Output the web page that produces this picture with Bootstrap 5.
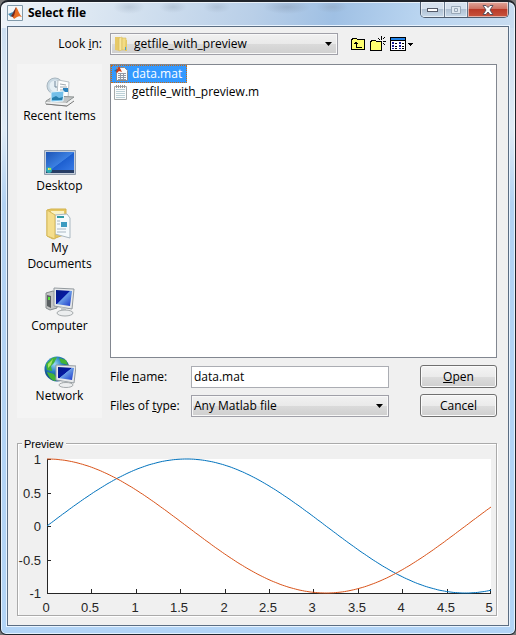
<!DOCTYPE html>
<html lang="en">
<head>
<meta charset="utf-8">
<meta name="viewport" content="width=device-width, initial-scale=1">
<title>Select file</title>
<link href="https://cdn.jsdelivr.net/npm/bootstrap@5.3.0/dist/css/bootstrap.min.css" rel="stylesheet">
<style>
body{font-family:"Open Sans","Noto Sans",sans-serif;font-size:12px;line-height:16px;color:#000;background:#777}
.window-frame{min-height:100vh;padding:0 6px 6px;border:1px solid #20242b;border-top-width:2px;border-radius:8px 8px 6px 6px;
 background:radial-gradient(ellipse 16px 7px at 128px 5px,#8c9cb055,transparent),radial-gradient(ellipse 14px 6px at 172px 5px,#8c9cb055,transparent),radial-gradient(ellipse 14px 6px at 216px 5px,#8c9cb055,transparent),radial-gradient(ellipse 24px 7px at 286px 5px,#8497b077,transparent),radial-gradient(ellipse 16px 6px at 331px 5px,#8c9cb066,transparent),linear-gradient(100deg,#eef3f8 0,#dce7f2 90px,#b9cfe8 250px,#9fc0e4 330px,#bbd6f1 420px,#c8dcf0 100%) 0 0/100% 26px no-repeat,linear-gradient(#c8dcf0 0,#e0ebf5 20%,#b2d2f3 32%,#b2d4f6 100%);box-shadow:inset 0 0 0 1px #ffffffaa}
.title-bar{height:24px}
.title-caption{padding-top:3px;gap:5px}
.title-text{font-weight:700;line-height:16px}
.caption-group{height:16px;border:1px solid #4f5e70;border-top:0;border-radius:0 0 5px 5px;overflow:hidden}
.caption-btn{border:0;padding:0;width:23px;box-shadow:inset 0 0 0 1px #ffffff88;background:linear-gradient(#d6e1ed 0 45%,#aebfd1 46%,#c9daea);display:flex;align-items:center;justify-content:center}
.caption-btn + .caption-btn{border-left:1px solid #66778b}
.caption-close{width:41px;background:linear-gradient(#e1a69b 0,#cf7262 45%,#b93826 46%,#c8543d 100%)}
.client{border:1px solid #5b6d82;background:#f0f0f0;padding:6px 11px 9px 9px;box-shadow:0 0 0 1px #e7f3ff}
.look-row{margin-bottom:9px}
.label-col{width:85px}
.ctl{height:22px;border:1px solid #abadb3;border-radius:0;font-size:12px;line-height:16px;color:#000;padding:0 2px}
select.ctl{appearance:none;border-color:#a0a0a8;background:linear-gradient(#f1f1f1 0,#e9e9e9 50%,#dadada 51%,#cfcfcf);box-shadow:inset 0 0 0 1px #f8f8f8}
.combo{position:relative}
.combo .arrow{position:absolute;right:6px;top:9px;pointer-events:none}
.combo .folder{position:absolute;left:4px;top:3px;pointer-events:none}
.look-combo{flex:0 1 228px}
.look-combo select{padding-left:23px}
.tool{border:0;padding:0;background:none;display:flex}
.places{width:85px;background:#f4f4f4;padding:1px 0 3px}
.place{height:70px;border:0;background:none;color:#000;padding:0 5px;display:flex;flex-direction:column;align-items:center;justify-content:center;text-align:center}
.files{height:294px;border:1px solid #828790;background:#fff;margin-bottom:7px}
.file-item{height:18px;border:1px solid transparent;background:none;padding:0 4px 0 2px;display:flex;align-items:center;gap:4px;color:#000}
.file-item.chosen{background:#3399ff;border:1px dotted #c86a12;color:#fff}
.form-label-col{width:81px}
.name-row{margin-bottom:6px}
.btn-dlg{width:77px;height:23px;margin-left:31px;padding:0;font-size:12px;line-height:16px;border:1px solid #707070;border-radius:3px;color:#000;background:linear-gradient(#f4f4f4 0,#ebebeb 50%,#dddddd 51%,#cfcfcf);box-shadow:inset 0 0 0 1px #fbfbfb}
.preview{border:1px solid #aaa;box-shadow:1px 1px 0 #fff,inset 1px 1px 0 #fff;margin-top:25px;padding:0;min-width:0;position:relative}
.preview legend{float:none;position:absolute;left:4px;top:-7px;width:auto;margin:0;padding:0 3px 0 2px;background:#f0f0f0;font:11px/14px "Liberation Sans",Arial,sans-serif}
.plot text{font:13px "Liberation Sans",Arial,sans-serif;fill:#262626}
</style>
</head>
<body>
<main class="window-frame">
 <header class="title-bar d-flex align-items-start justify-content-between">
  <div class="title-caption d-flex align-items-center">
   <svg width="16" height="16" viewBox="0 0 16 16"><path fill="#f5f7f8" stroke="#819aaa" d="M.5.5h15v15H.5z"/><path fill="#418cb6" d="M1 9l5-2 3-4-2 7-3 2z"/><path fill="#75291f" d="M6 8l3-6 1 7-3 4-3-2z"/><path fill="#e76c22" d="M9 2c2 2 3 7 6 10-3-1-3-1-5 0l-3 2-1-2c2-2 2-6 3-10z"/></svg>
   <span class="title-text">Select file</span>
  </div>
  <div class="caption-group d-flex">
   <button class="caption-btn" type="button" aria-label="Minimize"><svg width="12" height="6"><rect x=".5" y="1.5" width="10" height="3" fill="#fff" stroke="#555b69"/></svg></button>
   <button class="caption-btn" type="button" aria-label="Maximize" disabled><svg width="12" height="10"><path fill="#dfe8f0" stroke="#9aa9b8" d="M1.500 1.500h9v7h-9zM4.500 3.500h3v3h-3z"/></svg></button>
   <button class="caption-btn caption-close" type="button" aria-label="Close"><svg width="12" height="10" viewBox="0 0 12 10"><path fill="#fff" stroke="#5b5360" d="M1 .5h3l2 2 2-2h3L8 5l3 4.500H8L6 7 4 9.500H1L4 5z"/></svg></button>
  </div>
 </header>

 <form class="client" onsubmit="return false">
  <div class="look-row d-flex align-items-center">
   <label class="label-col text-end me-2" for="look">Look <u>i</u>n:</label>
   <div class="combo look-combo">
    <select class="ctl w-100" id="look"><option>getfile_with_preview</option></select>
    <svg class="folder" width="15" height="16" viewBox="0 0 15 16"><path fill="#e7c968" d="M1 1h5v14l-5-1z"/><path fill="#f8e69d" stroke="#d9bc5d" stroke-width=".6" d="M5 2l3-1v13l-3 1z"/><path fill="#f3dc83" stroke="#d5b85a" stroke-width=".6" d="M8 2h4v12H8z"/><path fill="#e5c964" d="M12 4h1v11h-2z"/><path fill="#4c9ed4" d="M11 11h1v3h-1z"/></svg>
    <svg class="arrow" width="7" height="4"><path d="M0 0h7L3.500 4z"/></svg>
   </div>
   <div class="d-flex align-items-center ms-2 ps-1 gap-1">
    <button class="tool" type="button" aria-label="Up one level"><svg width="16" height="16" viewBox="0 0 16 16" shape-rendering="crispEdges"><path fill="#ffff70" stroke="#000" d="M1.500 13.500v-10h1v-1h4l1 1h7v10z"/><path fill="#000" d="M5 6h2v1h1v1H7v3h5v1H6V8H4V7h1z"/></svg></button>
    <button class="tool" type="button" aria-label="New folder"><svg width="16" height="16" viewBox="0 0 16 16" shape-rendering="crispEdges"><path fill="#ffff70" stroke="#000" d="M.5 14.500v-9h1v-1h4l1 1h5v9z"/><path stroke="#000" d="M11.500 0v4m0 3v3M7 5.500h3m3 0h3M8 2l2 2m3-1l2-2M13 7l2 2"/></svg></button>
    <button class="tool" type="button" aria-label="View menu"><svg width="24" height="16" viewBox="0 0 24 16" shape-rendering="crispEdges"><path fill="#fff" stroke="#000" d="M.5 1.500h15v13H.5z"/><path fill="#2082e8" d="M1 2h14v2H1z"/><path fill="#000" d="M1 4h14v1H1zM5 7h2v1H5zM5 10h2v1H5zM5 12h2v1H5zM12 7h2v1h-2zM12 10h2v1h-2zM12 12h2v1h-2zM18 7h5v1h-1v1h-1v1h-1V9h-1V8h-1z"/><path fill="#1b1b96" d="M2 6h2v2H2zM2 9h2v2H2zM2 12h2v1H2zM9 6h2v2H9zM9 9h2v2H9zM9 12h2v1H9z"/></svg></button>
   </div>
  </div>

  <div class="d-flex gap-2">
   <nav class="places d-flex flex-column flex-shrink-0" aria-label="Places">
    <button class="place" type="button"><svg width="32" height="32" viewBox="0 0 32 32"><circle cx="11" cy="10" r="8" fill="#c9d9e3" stroke="#a7b5bf"/><circle cx="11" cy="10" r="5.500" fill="#e6f0f5"/><path d="M11 5v6h5" fill="none" stroke="#72889b"/><path fill="#fff" stroke="#bbc3c7" d="M14 4l11 2-1 17-11-3z"/><path d="M16 8l6 1m-6 2h7m-7 3h7" stroke="#a1aab0"/><path fill="#2c83be" d="M19 12h5v4h-5z"/><path fill="#c2c5c5" stroke="#8d9292" d="M2 25l8-5 20 1-7 5v4L2 28z"/><path fill="#73bfe9" stroke="#e8f5fa" d="M7 16l13-1-1 10-12 1z"/><path fill="#267eac" d="M8 22l4-2 3 2 4-1-1 3H8z"/><path fill="#f0f1f1" d="M2 26l21 1 7-5v3l-7 5-21-2z"/><path fill="none" stroke="#777" d="M2 28l21 2 7-5"/></svg><span class="text-nowrap">Recent Items</span></button>
    <button class="place" type="button"><svg width="32" height="32" viewBox="0 0 32 32"><defs><linearGradient id="desk" x2="1" y2="1"><stop stop-color="#1c54b5"/><stop offset=".5" stop-color="#3c80e2"/><stop offset=".52" stop-color="#1d5fd0"/><stop offset="1" stop-color="#3b7ee8"/></linearGradient></defs><path fill="#c5cedb" stroke="#929ead" d="M.5 4.500h31v24H.5z"/><path fill="url(#desk)" d="M2 6h28v21H2z"/><path fill="#273d65" d="M2 24h28v3H2z"/><circle cx="5" cy="24" r="3" fill="#2daab2"/><path fill="#f7df71" d="M4 22h1v2H4z"/><path fill="#a7e75c" d="M5 22h2v2H5z"/></svg><span>Desktop</span></button>
    <button class="place" type="button"><svg width="32" height="32" viewBox="0 0 32 32"><path fill="#e5c663" stroke="#d4b34d" d="M3 2l4-1h15v25L9 31l-6-3z"/><path fill="#faf3c6" d="M7 3h13v23H7z"/><path fill="#f5fafc" stroke="#aab8c1" d="M11 7l12-1 3 4v20l-15-4z"/><path fill="#2f9aa5" d="M13 8h7v2h-7z"/><path fill="#3c9bc0" d="M17 14h6v5h-6z"/><path stroke="#a8b7c3" d="M13 13h3m-3 3h3m-3 5h9m-9 3h9"/><path fill="#f5de8c" stroke="#d6b95c" d="M3 2l8 5v24l-8-3z"/></svg><span>My Documents</span></button>
    <button class="place" type="button"><svg width="32" height="32" viewBox="0 0 32 32"><defs><linearGradient id="screen" x2="1" y2="1"><stop stop-color="#051b84"/><stop offset=".45" stop-color="#0618a2"/><stop offset=".48" stop-color="#699ce7"/><stop offset="1" stop-color="#1733c9"/></linearGradient></defs><path fill="#c4c5c5" stroke="#858b8e" d="M2 7l7-2 4 2v15l-7 2-4-2z"/><path fill="#595e61" d="M3 9l4 1v12l-4-2z"/><path fill="#58e638" d="M4 11h2v3H4z"/><path fill="#e7e9ea" stroke="#92999e" d="M10 2l20 1-2 20-18-3z"/><path fill="url(#screen)" d="M12 4l16 1-2 15-14-2z"/><path fill="#c4c9cb" d="M17 21l5 1v4h-5z"/><ellipse cx="21" cy="27" rx="8" ry="3" fill="#eceeef" stroke="#a5aaac"/></svg><span>Computer</span></button>
    <button class="place" type="button"><svg width="32" height="32" viewBox="0 0 32 32"><defs><radialGradient id="globe" cx=".4" cy=".3"><stop stop-color="#9ed9f5"/><stop offset=".6" stop-color="#2683c4"/><stop offset="1" stop-color="#155794"/></radialGradient></defs><circle cx="13" cy="13" r="12.500" fill="url(#globe)"/><path fill="#43b336" d="M2 8l6-6 5-1-3 6-3 3 1 5-5-1zM15 2l7 2 2 5-7-2zM3 16l7 2 3 5-2 2c-4-1-7-5-8-9z"/><path fill="#a4e468" d="M4 8l5-5-2 6-3 3z"/><path fill="#e7e9ea" stroke="#92999e" d="M12 9l20 1-2 17-18-3z"/><path fill="url(#screen)" d="M14 11l16 1-2 12-14-2z"/><path fill="#c4c9cb" d="M18 25l5 1v3h-5z"/><ellipse cx="22" cy="29" rx="7" ry="2.500" fill="#eceeef" stroke="#a5aaac"/></svg><span>Network</span></button>
   </nav>

   <div class="flex-grow-1">
    <div class="files" role="listbox" aria-label="Files">
     <button class="file-item chosen" type="button" role="option" aria-selected="true"><svg width="14" height="16" viewBox="0 0 14 16"><path fill="#fafafa" stroke="#8b8b8b" d="M2.500 1.500h8l3 3v10h-11z"/><path d="M4 7.500h8m-8 2h8m-8 2h8m-8 2h8M6.500 7v7m3-7v7" stroke="#9299a5"/><path fill="#286d9a" d="M0 5l4-3v4z"/><path fill="#ca3b1b" d="M2 6l3-6 3 6-3-1-2 2z"/></svg>data.mat</button>
     <button class="file-item" type="button" role="option" aria-selected="false"><svg width="14" height="16" viewBox="0 0 14 16"><path fill="#fafcfc" stroke="#a6aaaa" d="M.5 2.500h12v13H.5z"/><path d="M2 5.500h9m-9 2h9m-9 2h9m-9 2h9m-9 2h9" stroke="#bbd0d6"/><path d="M2.500 1v3m2-3v3m2-3v3m2-3v3m2-3v3" stroke="#999"/></svg>getfile_with_preview.m</button>
    </div>
    <div class="name-row d-flex align-items-center">
     <label class="form-label-col" for="filename">File <u>n</u>ame:</label>
     <input class="ctl flex-grow-1" id="filename" type="text" value="data.mat">
     <button class="btn btn-dlg" type="submit"><u>O</u>pen</button>
    </div>
    <div class="d-flex align-items-center">
     <label class="form-label-col" for="filetype">Files of <u>t</u>ype:</label>
     <div class="combo flex-grow-1"><select class="ctl w-100" id="filetype"><option>Any Matlab file</option></select><svg class="arrow" width="7" height="4"><path d="M0 0h7L3.500 4z"/></svg></div>
     <button class="btn btn-dlg" type="button">Cancel</button>
    </div>
   </div>
  </div>

  <fieldset class="preview">
   <legend>Preview</legend>
   <svg class="plot d-block w-100" viewBox="0 0 478 171" role="img" aria-label="Sine and cosine curves">
    <path fill="#fff" d="M29 15h444v134H29z"/>
    <g id="ticks" stroke="#262626" shape-rendering="crispEdges"><path fill="none" d="M29.500 15v134.500H473"/></g>
    <g id="labels"></g>
    <path id="sine" fill="none" stroke="#0072bd"/>
    <path id="cosine" fill="none" stroke="#d95319"/>
   </svg>
  </fieldset>
 </form>
</main>
<script src="https://cdn.jsdelivr.net/npm/bootstrap@5.3.0/dist/js/bootstrap.bundle.min.js"></script>
<script>
const left = 29, mid = 82, amp = 67, unit = 88.8;
const ns = 'http://www.w3.org/2000/svg';
function curve(id, fn) {
  let d = '';
  for (let i = 0; i <= 200; i++) {
    const t = i / 40;
    d += (i ? 'L' : 'M') + (left + t * unit).toFixed(1) + ' ' + (mid - amp * fn(t)).toFixed(1);
  }
  document.getElementById(id).setAttribute('d', d);
}
function tick(d) {
  const p = document.createElementNS(ns, 'path');
  p.setAttribute('d', d);
  document.getElementById('ticks').append(p);
}
function label(x, y, text, anchor) {
  const t = document.createElementNS(ns, 'text');
  t.setAttribute('x', x);
  t.setAttribute('y', y);
  t.setAttribute('text-anchor', anchor);
  t.textContent = text;
  document.getElementById('labels').append(t);
}
curve('sine', Math.sin);
curve('cosine', Math.cos);
for (let v = 0; v <= 5; v += 0.5) {
  const x = Math.min(Math.round(left + v * unit), 472);
  tick(`M${x + 0.5} 149v-4`);
  label(x - 1, 168, v, 'middle');
}
for (let v = -1; v <= 1; v += 0.5) {
  const y = Math.round(mid - v * amp);
  tick(`M29 ${y + 0.5}h4`);
  label(23, y + 5, v, 'end');
}
</script>
</body>
</html>
